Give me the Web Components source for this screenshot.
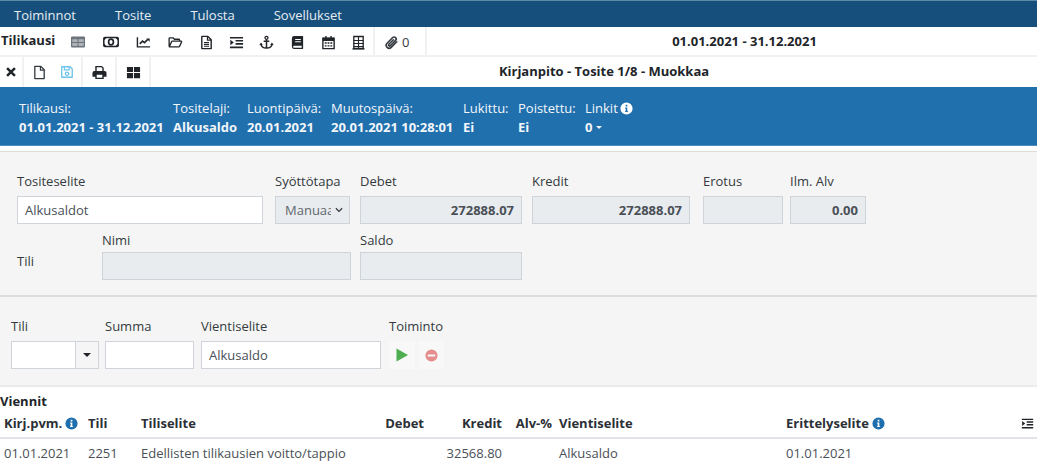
<!DOCTYPE html>
<html lang="fi">
<head>
<meta charset="utf-8">
<title>Kirjanpito</title>
<style>
  html, body { margin: 0; padding: 0; background: #fff; }
  body { font: 13px "Open Sans", "Liberation Sans", sans-serif; color: #343a40; width: 1037px; height: 463px; overflow: hidden; }
</style>
</head>
<body>
<app-menu>
  <span>Toiminnot</span><span>Tosite</span><span>Tulosta</span><span>Sovellukset</span>
</app-menu>
<app-toolbar></app-toolbar>
<doc-bar></doc-bar>
<doc-info></doc-info>
<voucher-form></voucher-form>
<entry-form></entry-form>
<entry-table></entry-table>

<script>
const ICONS = {
  table: '<path fill="currentColor" fill-rule="evenodd" d="M2 2.5h12a1 1 0 0 1 1 1v9a1 1 0 0 1-1 1H2a1 1 0 0 1-1-1v-9a1 1 0 0 1 1-1zM2.500 5.500v2.300h4.800V5.500zm6.200 0v2.300h4.800V5.500zM2.500 9v2.800h4.800V9zm6.200 0v2.800h4.800V9z"/><path fill="currentColor" opacity=".55" d="M2.500 5.500h4.800v2.300H2.500zM8.700 5.500h4.800v2.300H8.700zM2.500 9h4.800v2.800H2.500zM8.700 9h4.800v2.800H8.700z"/>',
  money: '<rect x="0.8" y="3.5" width="14.4" height="9" rx="1" fill="none" stroke="currentColor" stroke-width="1.5"/><ellipse cx="8" cy="8" rx="2.4" ry="2.8" fill="none" stroke="currentColor" stroke-width="1.7"/><path fill="currentColor" d="M1 4h2.4L1 6.4zM15 4h-2.4L15 6.4zM1 12h2.4L1 9.6zM15 12h-2.4L15 9.6z"/>',
  chart: '<path d="M1.5 2.5v10.2h13.5" fill="none" stroke="currentColor" stroke-width="1.5"/><path d="M4 9.5l3-3 2 1.6 3.6-3.4" fill="none" stroke="currentColor" stroke-width="1.7"/><path fill="currentColor" d="M11 3.6h3.6v3.6z"/>',
  folder: '<path d="M1.2 12V3.8a.8.8 0 0 1 .8-.8h3.4l1.5 1.5h4.6a.8.8 0 0 1 .8.8v1.4M1.4 12.6l2.4-5.4a1 1 0 0 1 .9-.6h9.3a.6.6 0 0 1 .5.9l-2.2 4.6a.8.8 0 0 1-.7.5z" fill="none" stroke="currentColor" stroke-width="1.4" stroke-linejoin="round"/>',
  file: '<path d="M3 1.5h6.5L13 5v9.5H3z" fill="none" stroke="currentColor" stroke-width="1.5" stroke-linejoin="round"/><path d="M9 1.5V5.5h4M5.3 8h5.4M5.3 10h5.4M5.3 12h5.4" fill="none" stroke="currentColor" stroke-width="1.2"/>',
  blank: '<path d="M3 1.5h6.5L13 5v9.5H3z" fill="none" stroke="currentColor" stroke-width="1.4" stroke-linejoin="round"/><path d="M9 1.5V5.5h4" fill="none" stroke="currentColor" stroke-width="1.3"/>',
  indent: '<path fill="currentColor" d="M1 2h14v1.8H1zM7 5.2h8V7H7zM7 8.6h8v1.8H7zM1 12.2h14V14H1zM1.4 5l3.8 3-3.8 3z"/>',
  anchor: '<circle cx="8" cy="3" r="1.6" fill="none" stroke="currentColor" stroke-width="1.4"/><path d="M8 4.6V14M5 6.7h6M2 9.6c.3 2.8 2.8 4.3 6 4.3s5.7-1.5 6-4.3" fill="none" stroke="currentColor" stroke-width="1.6"/><path fill="currentColor" d="M.4 10.7L2.2 8l1.9 2.7zM11.9 10.7L13.8 8l1.8 2.7z"/>',
  book: '<path fill="currentColor" fill-rule="evenodd" d="M4.5 1H13.5a.5.5 0 0 1 .5.5v13a.5.5 0 0 1-.5.5H4.5A2.5 2.5 0 0 1 2 12.5v-9A2.5 2.5 0 0 1 4.5 1zM5.5 4.3v1h6v-1zm0 2.3v1h6v-1zM4.3 11.5a1 1 0 0 0 0 2h8.2v-2z"/>',
  calendar: '<path d="M2 3.5h12v11H2z" fill="none" stroke="currentColor" stroke-width="1.5"/><path fill="currentColor" d="M2 3h12v3.5H2zM4.5 1H6v3H4.5zM10 1h1.5v3H10zM4 7.8h2v1.5H4zM7 7.8h2v1.5H7zM10 7.8h2v1.5h-2zM4 10.8h2v1.5H4zM7 10.8h2v1.5H7zM10 10.8h2v1.5h-2z"/>',
  building: '<path d="M3 1.6h10V14.400H3z" fill="none" stroke="currentColor" stroke-width="1.400"/><path fill="currentColor" d="M1.500 14h13v1.500h-13zM7.400 1.600h1.200V14H7.400zM3 5.300h10v1H3zM3 8.500h10v1H3zM3 11.700h10v1H3z"/>',
  clip: '<path d="M13.6 7.2L7.7 13.2a3.1 3.1 0 0 1-4.4-4.4l6-6.1a2.1 2.1 0 0 1 3 3l-5.6 5.7a1 1 0 0 1-1.5-1.5L10 5.100" fill="none" stroke="currentColor" stroke-width="1.7" stroke-linecap="round"/>',
  times: '<path d="M3.5 3.5l9 9M12.5 3.5l-9 9" fill="none" stroke="currentColor" stroke-width="2.9"/>',
  save: '<path d="M2 2h9.5L14 4.5V14H2z" fill="none" stroke="currentColor" stroke-width="1.5" stroke-linejoin="round"/><path d="M5 2v3.5h5.5V2" fill="none" stroke="currentColor" stroke-width="1.3"/><circle cx="8" cy="10" r="1.9" fill="none" stroke="currentColor" stroke-width="1.4"/>',
  print: '<path fill="currentColor" fill-rule="evenodd" d="M3.5 1h7l2 2v3.5h1A2 2 0 0 1 15.5 8.5v4h-3V15h-9v-2.5h-3v-4a2 2 0 0 1 2-2h1zM5 2.5v4h6v-3l-1-1zM5 10.5v3h6v-3z"/>',
  grid: '<path fill="currentColor" d="M1 2h6.5v5.5H1zM8.5 2H15v5.5H8.5zM1 8.5h6.5V14H1zM8.5 8.5H15V14H8.5z"/>',
  play: '<path fill="currentColor" d="M2.5 1.5L14 8 2.5 14.5z"/>',
  stop: '<path fill="currentColor" fill-rule="evenodd" d="M8 1.5a6.5 6.5 0 1 1 0 13 6.5 6.5 0 0 1 0-13zM4 7v2h8V7z"/>',
  info: '<path fill="currentColor" fill-rule="evenodd" d="M8 .5a7.5 7.5 0 1 1 0 15 7.5 7.5 0 0 1 0-15zM7 3.3v2.2h2.100V3.300zM6.300 6.700v1.300H7v3H6.300v1.300h3.400V11H9V6.700z"/>'
};

class AppIcon extends HTMLElement {
  connectedCallback() {
    const size = this.getAttribute('size') || 14;
    this.attachShadow({mode: 'open'}).innerHTML = `
      <style>:host{display:inline-flex;align-items:center;justify-content:center;line-height:0}</style>
      <svg width="${size}" height="${size}" viewBox="0 0 16 16" aria-hidden="true">${ICONS[this.getAttribute('name')]}</svg>`;
  }
}
customElements.define('app-icon', AppIcon);

class AppMenu extends HTMLElement {
  constructor() {
    super();
    this.attachShadow({mode: 'open'}).innerHTML = `
      <style>
        :host{display:flex;gap:39px;height:27px;box-sizing:border-box;padding:1px 0 0 14px;align-items:center;background:#174f7c;border-top:1px solid #5d8aa8;color:#e6edf2;font-size:13px}
      </style>
      <slot></slot>`;
  }
}
customElements.define('app-menu', AppMenu);

class AppToolbar extends HTMLElement {
  constructor() {
    super();
    const tools = [['table',32.5],['money',33],['chart',32.5],['folder',31.5],['file',30],['indent',29.5],['anchor',31],['book',31],['calendar',30],['building',30]];
    const icons = tools.map(t => `<app-icon name="${t[0]}" size="${t[0] === 'money' || t[0] === 'table' ? 16 : 15}" class="${t[0]}" style="width:${t[1]}px"></app-icon>`).join('');
    this.attachShadow({mode: 'open'}).innerHTML = `
      <style>
        :host{display:flex;height:30px;box-sizing:border-box;align-items:center;background:#fff;border-bottom:2px solid #f1f1f1;color:#212529}
        .name{width:62px;padding-left:1px;font-weight:700;font-size:13px;box-sizing:border-box;margin-top:-3px}
        .icons{display:flex;width:311px;margin-top:2px}
        .table{color:#6c757d}
        .attach{width:54px;height:100%;box-sizing:border-box;display:flex;align-items:center;gap:3px;padding:2px 0 0 9px;border-left:2px solid #f1f1f1;border-right:2px solid #f1f1f1;color:#343a40;font-size:13px}
        .period{flex:1;text-align:center;font-weight:700;font-size:13px;padding-left:25px;color:#212529}
      </style>
      <div class="name">Tilikausi</div>
      <div class="icons">${icons}</div>
      <div class="attach"><app-icon name="clip" size="15"></app-icon><span>0</span></div>
      <div class="period">01.01.2021 - 31.12.2021</div>`;
  }
}
customElements.define('app-toolbar', AppToolbar);

class DocBar extends HTMLElement {
  constructor() {
    super();
    this.attachShadow({mode: 'open'}).innerHTML = `
      <style>
        :host{display:flex;height:30px;box-sizing:border-box;align-items:stretch;background:#fff;color:#212529}
        .group{display:flex;align-items:center;justify-content:center;border-right:2px solid #f1f1f1;box-sizing:border-box}
        .a{width:24px}.b{width:59px;gap:13px}.c{width:34px}.d{width:34px}
        .save{color:#6cc4ea}
        .blank{color:#343a40}
        .title{flex:1;text-align:center;align-self:center;font-weight:700;font-size:13px;padding-left:20px;margin-top:-2px}
      </style>
      <div class="group a"><app-icon name="times" size="14"></app-icon></div>
      <div class="group b"><app-icon class="blank" name="blank" size="15"></app-icon><app-icon class="save" name="save" size="14"></app-icon></div>
      <div class="group c"><app-icon name="print" size="15"></app-icon></div>
      <div class="group d"><app-icon name="grid" size="15"></app-icon></div>
      <div class="title">Kirjanpito - Tosite 1/8 - Muokkaa</div>`;
  }
}
customElements.define('doc-bar', DocBar);

class InfoItem extends HTMLElement {
  constructor() {
    super();
    this.attachShadow({mode: 'open'}).innerHTML = `
      <style>
        :host{display:flex;flex-direction:column;gap:3px;white-space:nowrap;font-size:13px;line-height:16px}
        .v{font-weight:700;display:flex;align-items:center}
        .l{display:flex;align-items:center;gap:2px}
      </style>
      <div class="l"><slot name="label"></slot></div>
      <div class="v"><slot></slot></div>`;
  }
}
customElements.define('info-item', InfoItem);

class DocInfo extends HTMLElement {
  constructor() {
    super();
    const items = [
      [154, 'Tilikausi:', '01.01.2021 - 31.12.2021'],
      [74, 'Tositelaji:', 'Alkusaldo'],
      [84, 'Luontipäivä:', '20.01.2021'],
      [132, 'Muutospäivä:', '20.01.2021 10:28:01'],
      [55, 'Lukittu:', 'Ei'],
      [67, 'Poistettu:', 'Ei']
    ];
    const html = items.map(i => `<info-item style="width:${i[0]}px"><span slot="label">${i[1]}</span>${i[2]}</info-item>`).join('');
    this.attachShadow({mode: 'open'}).innerHTML = `
      <style>
        :host{display:flex;height:59px;box-sizing:border-box;padding:13px 0 0 19px;background:#2170ae;border-bottom:1px solid #4c8fc0;color:#f2f6fa}
        .caret{width:0;height:0;margin-left:4px;border:3px solid transparent;border-top-color:#f2f6fa;border-bottom:0}
      </style>
      ${html}
      <info-item>
        <span slot="label">Linkit</span><app-icon slot="label" name="info" size="13" style="color:#fff"></app-icon>
        <span>0</span><span class="caret"></span>
      </info-item>`;
  }
}
customElements.define('doc-info', DocInfo);

class FormField extends HTMLElement {
  constructor() {
    super();
    this.attachShadow({mode: 'open'}).innerHTML = `
      <style>
        :host{display:flex;flex-direction:column;gap:var(--label-gap,4px);font-size:13px;box-sizing:border-box;color:#343a40}
        .label{line-height:16px;white-space:nowrap}
      </style>
      <div class="label"><slot name="label"></slot></div>
      <slot></slot>`;
  }
}
customElements.define('form-field', FormField);

class TextBox extends HTMLElement {
  constructor() {
    super();
    this.attachShadow({mode: 'open'}).innerHTML = `
      <style>
        :host{display:flex;align-items:center;height:28px;box-sizing:border-box;padding:0 7px;background:#fff;border:1px solid #ced4da;color:#495057;font-size:13px;white-space:nowrap;overflow:hidden}
        :host([readonly]){background:#e9ecef;justify-content:flex-end;font-weight:700}
      </style>
      <slot></slot>`;
  }
}
customElements.define('text-box', TextBox);

class VoucherForm extends HTMLElement {
  constructor() {
    super();
    this.attachShadow({mode: 'open'}).innerHTML = `
      <style>
        :host{display:block;margin-top:5px;height:146px;box-sizing:border-box;padding:21px 0 0 17px;background:#f5f5f5;border-top:1px solid #dcdcdc;border-bottom:2px solid #dcdcdc;--label-gap:7px}
        .row{display:flex;align-items:flex-start}
        .row2{margin-top:8px;align-items:center;--label-gap:4px}
        .tili{width:85px;font-size:13px;color:#343a40;padding-top:9px}
        .sel{padding:0 6px 0 9px;background:#e9ecef;justify-content:space-between;color:#5f676e}
        .clip{display:block;width:46px;overflow:hidden}
        svg{flex:none}
      </style>
      <div class="row">
        <form-field style="width:246px"><span slot="label">Tositeselite</span><text-box>Alkusaldot</text-box></form-field>
        <form-field style="width:75px;margin-left:12px"><span slot="label">Syöttötapa</span>
          <text-box class="sel"><span class="clip">Manuaali</span><svg width="8" height="6" viewBox="0 0 9 6"><path d="M1 1l3.5 3.5L8 1" fill="none" stroke="#343a40" stroke-width="1.4"/></svg></text-box>
        </form-field>
        <form-field style="width:162px;margin-left:10px"><span slot="label">Debet</span><text-box readonly>272888.07</text-box></form-field>
        <form-field style="width:158px;margin-left:10px"><span slot="label">Kredit</span><text-box readonly>272888.07</text-box></form-field>
        <form-field style="width:80px;margin-left:13px"><span slot="label">Erotus</span><text-box readonly></text-box></form-field>
        <form-field style="width:76px;margin-left:7px"><span slot="label">Ilm. Alv</span><text-box readonly>0.00</text-box></form-field>
      </div>
      <div class="row row2">
        <div class="tili">Tili</div>
        <form-field style="width:249px"><span slot="label">Nimi</span><text-box readonly></text-box></form-field>
        <form-field style="width:162px;margin-left:9px"><span slot="label">Saldo</span><text-box readonly></text-box></form-field>
      </div>`;
  }
}
customElements.define('voucher-form', VoucherForm);

class EntryForm extends HTMLElement {
  constructor() {
    super();
    this.attachShadow({mode: 'open'}).innerHTML = `
      <style>
        :host{display:flex;height:90px;box-sizing:border-box;padding:21px 0 0 11px;background:#f5f5f5;border-bottom:2px solid #ebebeb;align-items:flex-start;--label-gap:7px}
        .combo{display:flex;height:28px;box-sizing:border-box;background:#fff;border:1px solid #ced4da}
        .combo i{flex:1}
        .combo b{width:22px;border-left:1px solid #ced4da;background:#f5f5f5;display:flex;align-items:center;justify-content:center}
        .combo b::after{content:"";border:4px solid transparent;border-top:4px solid #212529;border-bottom:0}
        .btns{display:flex;gap:3px}
        .btn{width:26px;height:28px;display:flex;align-items:center;justify-content:center;background:#f8f8f8}
        .go{color:#4cae50}
        .no{color:#e58c8c}
      </style>
      <form-field style="width:88px"><span slot="label">Tili</span><div class="combo"><i></i><b></b></div></form-field>
      <form-field style="width:89px;margin-left:6px"><span slot="label">Summa</span><text-box></text-box></form-field>
      <form-field style="width:180px;margin-left:7px"><span slot="label">Vientiselite</span><text-box>Alkusaldo</text-box></form-field>
      <form-field style="margin-left:8px"><span slot="label">Toiminto</span>
        <div class="btns">
          <div class="btn go"><app-icon name="play" size="16"></app-icon></div>
          <div class="btn no"><app-icon name="stop" size="15"></app-icon></div>
        </div>
      </form-field>`;
  }
}
customElements.define('entry-form', EntryForm);

class EntryTable extends HTMLElement {
  constructor() {
    super();
    this.attachShadow({mode: 'open'}).innerHTML = `
      <style>
        :host{display:block;background:#fff;font-size:13px;color:#495057}
        h3{margin:0;padding:6px 0 0 0;font-size:13px;line-height:17px;font-weight:700;color:#212529}
        .grid{display:grid;grid-template-columns:84px 53px 199px 84px 78px 50px 227px 234px 1fr;padding-left:4px}
        .grid > div{display:flex;align-items:center;white-space:nowrap;line-height:17px}
        .head{font-weight:700;color:#2b3036;height:29px;box-sizing:border-box;border-bottom:2px solid #e2e4ea;font-size:13px}
        .first{margin-left:-4px;padding-left:4px}
        .end{justify-content:flex-end}
        .gap{padding-left:7px}
        .cell{height:28px}
        app-icon{margin-left:3px;color:#1f6fae}
        .tools{justify-content:flex-end;padding-right:3px;color:#212529}
        .tools app-icon{color:#212529}
      </style>
      <h3>Viennit</h3>
      <div class="grid">
        <div class="head first">Kirj.pvm.<app-icon name="info" size="13"></app-icon></div>
        <div class="head">Tili</div>
        <div class="head">Tiliselite</div>
        <div class="head end">Debet</div>
        <div class="head end">Kredit</div>
        <div class="head end">Alv-%</div>
        <div class="head gap">Vientiselite</div>
        <div class="head gap">Erittelyselite<app-icon name="info" size="13"></app-icon></div>
        <div class="head tools"><app-icon name="indent" size="13"></app-icon></div>
        <div class="cell">01.01.2021</div>
        <div class="cell">2251</div>
        <div class="cell">Edellisten tilikausien voitto/tappio</div>
        <div class="cell end"></div>
        <div class="cell end">32568.80</div>
        <div class="cell end"></div>
        <div class="cell gap">Alkusaldo</div>
        <div class="cell gap">01.01.2021</div>
        <div class="cell"></div>
      </div>`;
  }
}
customElements.define('entry-table', EntryTable);
</script>
</body>
</html>
